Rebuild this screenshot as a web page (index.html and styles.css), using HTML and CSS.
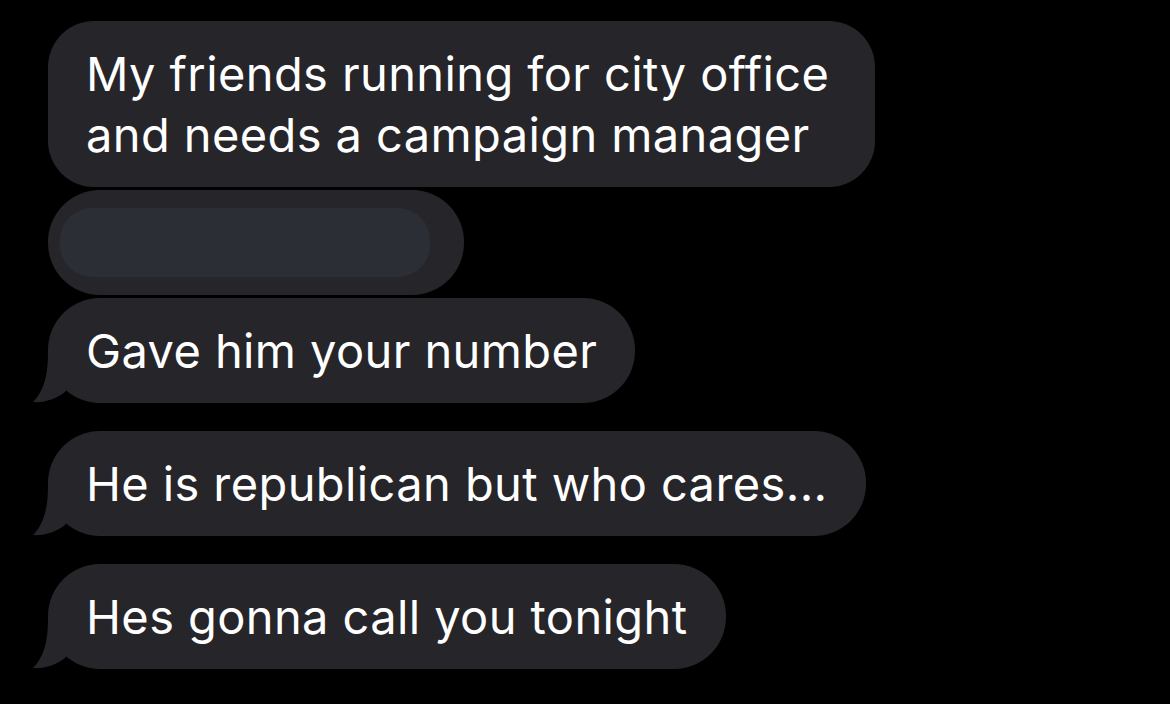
FILE: index.html
```html
<!DOCTYPE html>
<html lang="en">
<head>
    <meta charset="UTF-8">
    <meta name="viewport" content="width=device-width, initial-scale=1.0">
    <title>Messages</title>
    <link rel="stylesheet" href="styles.css">
</head>
<body>
    <div class="thread">
        <div class="bubble wrap">My friends running for city office<br>and needs a campaign manager</div>

        <div class="bubble hidden-msg">
            <div class="redact"></div>
        </div>

        <div class="bubble tail">
            Gave him your number
            <svg class="tail-shape" width="40" height="50" viewBox="0 0 40 50"><path d="M16 0 C16 22 12 38 1 49 C12 50 24 46 33 39 L40 30 L40 0 Z"/></svg>
        </div>

        <div class="bubble tail spaced">
            He is republican but who cares...
            <svg class="tail-shape" width="40" height="50" viewBox="0 0 40 50"><path d="M16 0 C16 22 12 38 1 49 C12 50 24 46 33 39 L40 30 L40 0 Z"/></svg>
        </div>

        <div class="bubble tail spaced">
            Hes gonna call you tonight
            <svg class="tail-shape" width="40" height="50" viewBox="0 0 40 50"><path d="M16 0 C16 22 12 38 1 49 C12 50 24 46 33 39 L40 30 L40 0 Z"/></svg>
        </div>
    </div>
</body>
</html>
```

FILE: styles.css
```css
* {
    box-sizing: border-box;
}

body {
    background: #000;
    margin: 0;
    font-family: 'Inter', 'Liberation Sans', sans-serif;
    color: #fff;
}

.thread {
    display: flex;
    flex-direction: column;
    align-items: flex-start;
    padding: 21px 0 0 48px;
    gap: 3px;
}

.bubble {
    position: relative;
    background: #262529;
    border-radius: 52px;
    padding: 22px 38px 22px 38px;
    font-size: 47px;
    letter-spacing: 0.4px;
    line-height: 61px;
    white-space: nowrap;
}

.bubble.wrap {
    border-radius: 46px;
    padding-right: 46px;
}

.hidden-msg {
    width: 416px;
    height: 105px;
    padding: 18px 34px 18px 12px;
}

.redact {
    height: 69px;
    background: #2b2e35;
    border-radius: 32px;
}

.spaced {
    margin-top: 25px;
}

.tail-shape {
    position: absolute;
    left: -16px;
    bottom: 0;
    fill: #262529;
}
```
